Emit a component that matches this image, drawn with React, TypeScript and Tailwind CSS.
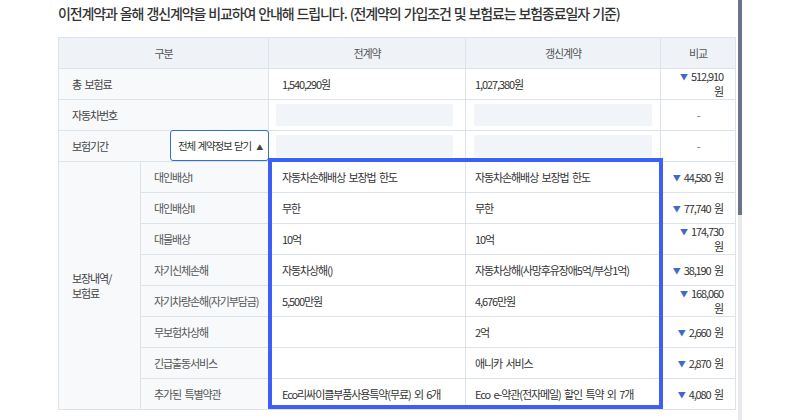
import React from "react";

const font = { fontFamily: '"Noto Sans CJK KR", "Noto Sans", sans-serif' };

type Row = { name: string; prev: string; next: string; diff: string; wrap?: boolean };

const coverRows: Row[] = [
  { name: "대인배상I", prev: "자동차손해배상 보장법 한도", next: "자동차손해배상 보장법 한도", diff: "44,580 원" },
  { name: "대인배상II", prev: "무한", next: "무한", diff: "77,740 원" },
  { name: "대물배상", prev: "10억", next: "10억", diff: "174,730", wrap: true },
  { name: "자기신체손해", prev: "자동차상해()", next: "자동차상해(사망후유장애5억/부상1억)", diff: "38,190 원" },
  { name: "자기차량손해(자기부담금)", prev: "5,500만원", next: "4,676만원", diff: "168,060", wrap: true },
  { name: "무보험차상해", prev: "", next: "2억", diff: "2,660 원" },
  { name: "긴급출동서비스", prev: "", next: "애니카 서비스", diff: "2,870 원" },
  { name: "추가된 특별약관", prev: "Eco리싸이클부품사용특약(무료) 외 6개", next: "Eco e-약관(전자메일) 할인 특약 외 7개", diff: "4,080 원" },
];

const Diff = ({ value, wrap }: { value: string; wrap?: boolean }) => (
  <div className="text-right leading-[15px] whitespace-nowrap">
    <span className="text-[8px] text-[#4468c8] mr-[4px] align-[1px]">▼</span>
    {value}
    {wrap && (
      <>
        <br />원
      </>
    )}
  </div>
);

const Placeholder = () => <div className="h-[22px] rounded-[2px] bg-[#f1f5f9]" />;

export default function App() {
  const cell = "border border-[#dde3ea] h-[31px] py-0 align-middle whitespace-nowrap";
  return (
    <div className="w-[800px] h-[420px] bg-white flex overflow-hidden" style={font}>
      <div className="w-[738px] pl-[58px] pt-[3px] flex flex-col">
        <h2 className="text-[14px] leading-[20px] font-medium text-[#333] tracking-[-0.08em] [word-spacing:1px] whitespace-nowrap">
          이전계약과 올해 갱신계약을 비교하여 안내해 드립니다. (전계약의 가입조건 및 보험료는 보험종료일자 기준)
        </h2>
        <div className="relative mt-[14px] w-[677px]">
          <table className="w-[677px] table-fixed border-collapse border border-[#b9c1cc] text-[11px] text-[#333] tracking-[-0.1em] [word-spacing:2px]">
            <colgroup>
              <col className="w-[82px]" />
              <col className="w-[128px]" />
              <col className="w-[197px]" />
              <col className="w-[195px]" />
              <col className="w-[75px]" />
            </colgroup>
            <thead>
              <tr className="bg-[#eff3f8] text-[#555]">
                <th colSpan={2} className={`${cell} h-[30px] font-normal`}>구분</th>
                <th className={`${cell} h-[30px] font-normal`}>전계약</th>
                <th className={`${cell} h-[30px] font-normal`}>갱신계약</th>
                <th className={`${cell} h-[30px] font-normal`}>비교</th>
              </tr>
            </thead>
            <tbody>
              <tr>
                <td colSpan={2} className={`${cell} bg-[#f7f9fb] pl-[13px] text-[#444]`}>총 보험료</td>
                <td className={`${cell} pl-[13px]`}>1,540,290원</td>
                <td className={`${cell} pl-[9px]`}>1,027,380원</td>
                <td className={`${cell} pr-[12px]`}>
                  <Diff value="512,910" wrap />
                </td>
              </tr>
              <tr>
                <td colSpan={2} className={`${cell} bg-[#f7f9fb] pl-[13px] text-[#444]`}>자동차번호</td>
                <td className={`${cell} pl-[7px] pr-[12px]`}>
                  <Placeholder />
                </td>
                <td className={`${cell} pl-[8px] pr-[8px]`}>
                  <Placeholder />
                </td>
                <td className={`${cell} text-center text-[#666]`}>-</td>
              </tr>
              <tr>
                <td colSpan={2} className={`${cell} relative bg-[#f7f9fb] pl-[13px] text-[#444]`}>
                  보험기간
                  <button className="absolute right-[-1px] top-[-1px] h-[31px] w-[99px] rounded-[3px] border-[1.5px] border-[#2f6fd8] bg-white pl-[7px] text-left text-[10.5px] text-[#333] whitespace-nowrap [word-spacing:1px]">
                    전체 계약정보 닫기 <span className="ml-[3px] text-[7px] text-[#444]">▲</span>
                  </button>
                </td>
                <td className={`${cell} pl-[7px] pr-[12px]`}>
                  <Placeholder />
                </td>
                <td className={`${cell} pl-[8px] pr-[8px]`}>
                  <Placeholder />
                </td>
                <td className={`${cell} text-center text-[#666]`}>-</td>
              </tr>
              {coverRows.map((r, i) => (
                <tr key={r.name}>
                  {i === 0 && (
                    <td rowSpan={coverRows.length} className={`${cell} bg-[#f7f9fb] pl-[13px] pr-[8px] text-[#444] leading-[15px]`}>
                      보장내역/
                      <br />
                      보험료
                    </td>
                  )}
                  <td className={`${cell} bg-[#f7f9fb] pl-[13px] text-[#555]`}>{r.name}</td>
                  <td className={`${cell} pl-[13px]`}>{r.prev}</td>
                  <td className={`${cell} pl-[9px]`}>{r.next}</td>
                  <td className={`${cell} pr-[12px]`}>
                    <Diff value={r.diff} wrap={r.wrap} />
                  </td>
                </tr>
              ))}
            </tbody>
          </table>
          <div className="pointer-events-none absolute left-[210px] top-[121px] h-[251px] w-[395px] border-4 border-[#3d5ff5]" />
        </div>
      </div>
      <div className="w-[4px] h-full flex flex-col">
        <div className="h-[215px] bg-[#6b7386]" />
        <div className="flex-1 bg-[#e8eaee]" />
      </div>
    </div>
  );
}
